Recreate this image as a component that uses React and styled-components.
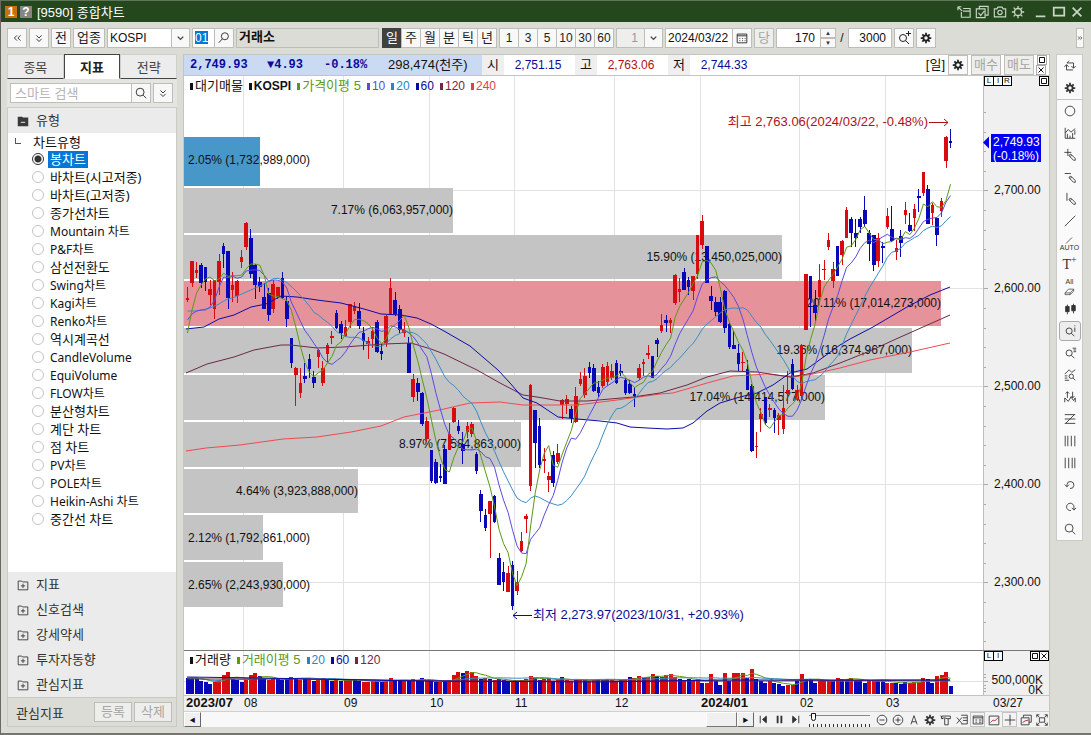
import React from "react";
import styled, { createGlobalStyle, css } from "styled-components";

const GlobalStyle = createGlobalStyle`
  * {
    box-sizing: border-box;
  }

  body {
    margin: 0;
    background: #dcdcd6;
  }

  body, button, input, select {
    font-family: "Liberation Sans", "Noto Sans CJK KR", sans-serif;
    font-size: 12px;
    color: #111;
  }

  button, input, select {
    margin: 0;
    padding: 0;
    border-radius: 0;
    outline: none;
  }
`;

/* ---------- data ---------- */

// one row per day: up (1) or down (0), body top, body bottom, wick top, wick bottom
const CANDLES = [
  [1, 298, 300, 287, 302], [1, 261, 283, 261, 287], [1, 270, 273, 262, 278], [0, 265, 283, 263, 288],
  [0, 267, 282, 267, 291], [1, 289, 295, 280, 305], [1, 280, 309, 280, 319], [1, 261, 282, 254, 295],
  [0, 246, 254, 243, 268], [0, 251, 298, 251, 309], [1, 285, 290, 272, 302], [1, 281, 296, 280, 303],
  [1, 257, 262, 250, 268], [1, 223, 247, 222, 250], [0, 238, 274, 229, 278], [0, 265, 285, 264, 299],
  [0, 282, 287, 277, 292], [0, 297, 309, 283, 309], [0, 293, 315, 288, 321], [1, 284, 309, 280, 313],
  [1, 287, 297, 287, 299], [0, 278, 298, 272, 299], [0, 301, 319, 297, 327], [0, 338, 363, 338, 368],
  [1, 368, 375, 367, 406], [1, 383, 393, 368, 398], [0, 376, 379, 363, 383], [0, 359, 369, 354, 378],
  [0, 377, 383, 371, 388], [1, 350, 357, 349, 368], [1, 368, 383, 361, 386], [1, 345, 354, 343, 362],
  [1, 336, 338, 331, 344], [0, 313, 328, 310, 329], [0, 324, 333, 321, 339], [1, 327, 336, 320, 337],
  [1, 304, 322, 304, 328], [1, 306, 311, 302, 314], [0, 311, 326, 303, 329], [0, 333, 341, 327, 350],
  [1, 341, 344, 337, 359], [1, 331, 339, 327, 348], [0, 322, 352, 320, 353], [0, 351, 354, 344, 360],
  [1, 316, 343, 315, 347], [1, 288, 314, 278, 315], [0, 300, 314, 292, 316], [0, 309, 330, 305, 333],
  [1, 330, 333, 322, 337], [0, 343, 373, 337, 373], [1, 379, 397, 374, 402], [0, 383, 392, 378, 401],
  [0, 393, 424, 392, 426], [1, 421, 439, 417, 442], [0, 450, 481, 450, 483], [0, 462, 483, 459, 484],
  [0, 476, 478, 464, 482], [0, 449, 484, 445, 484], [1, 434, 450, 423, 450], [1, 408, 422, 407, 423],
  [0, 426, 431, 420, 434], [0, 444, 451, 432, 464], [1, 426, 432, 422, 438], [1, 424, 434, 422, 437],
  [0, 454, 471, 452, 474], [0, 494, 511, 490, 522], [0, 515, 528, 509, 531], [1, 501, 514, 501, 558],
  [0, 496, 522, 495, 523], [0, 558, 585, 553, 585], [0, 572, 582, 562, 591], [1, 573, 592, 566, 592],
  [0, 565, 606, 561, 610], [1, 582, 591, 571, 595], [1, 541, 551, 532, 552], [1, 516, 519, 514, 533],
  [1, 385, 486, 384, 491], [0, 410, 443, 410, 468], [0, 426, 465, 418, 468], [1, 459, 461, 448, 473],
  [1, 476, 480, 472, 492], [0, 455, 483, 451, 487], [1, 453, 462, 444, 464], [1, 400, 405, 399, 419],
  [1, 399, 404, 395, 414], [0, 409, 418, 406, 423], [1, 396, 422, 387, 423], [1, 379, 384, 372, 386],
  [1, 376, 395, 368, 398], [0, 367, 373, 362, 378], [0, 368, 391, 364, 392], [0, 387, 393, 381, 397],
  [1, 367, 386, 364, 388], [1, 366, 382, 362, 386], [1, 371, 378, 364, 380], [0, 363, 383, 360, 384],
  [0, 371, 373, 364, 376], [0, 380, 393, 378, 395], [0, 384, 393, 380, 394], [0, 394, 396, 387, 407],
  [1, 368, 378, 364, 380], [1, 362, 364, 359, 376], [1, 353, 355, 345, 359], [0, 356, 378, 356, 378],
  [0, 340, 344, 338, 357], [1, 325, 331, 314, 333], [0, 320, 323, 315, 332], [1, 320, 323, 318, 333],
  [1, 275, 303, 274, 305], [1, 289, 292, 278, 302], [0, 272, 290, 268, 290], [0, 280, 287, 277, 295],
  [1, 276, 291, 276, 300], [1, 235, 274, 235, 279], [1, 221, 245, 215, 249], [0, 246, 283, 246, 283],
  [0, 296, 301, 286, 310], [0, 302, 312, 297, 316], [0, 302, 322, 297, 323], [0, 291, 328, 290, 333],
  [0, 324, 347, 322, 349], [0, 345, 349, 331, 349], [0, 353, 364, 344, 371], [1, 362, 363, 352, 372],
  [0, 369, 390, 360, 390], [0, 386, 451, 384, 452], [1, 446, 447, 432, 458], [1, 414, 419, 408, 432],
  [0, 397, 423, 397, 425], [1, 408, 410, 404, 417], [0, 410, 418, 408, 433], [1, 415, 420, 413, 435],
  [1, 408, 429, 385, 434], [1, 390, 394, 371, 404], [0, 364, 389, 359, 390], [1, 390, 400, 385, 401],
  [1, 345, 396, 344, 400], [1, 274, 330, 274, 330], [0, 276, 299, 276, 327], [0, 305, 313, 290, 321],
  [1, 280, 297, 264, 300], [1, 269, 270, 260, 280], [1, 240, 247, 233, 250], [1, 269, 281, 262, 288],
  [0, 246, 276, 246, 276], [1, 241, 255, 240, 265], [1, 210, 238, 207, 238], [0, 219, 233, 217, 247],
  [0, 233, 238, 219, 247], [0, 219, 227, 217, 233], [0, 210, 224, 196, 227], [0, 233, 244, 230, 261],
  [0, 235, 265, 235, 271], [1, 238, 261, 233, 267], [0, 246, 248, 242, 263], [1, 216, 227, 208, 229],
  [0, 229, 241, 206, 242], [1, 248, 252, 240, 260], [0, 236, 243, 230, 257], [1, 210, 215, 202, 224],
  [0, 225, 231, 213, 232], [1, 209, 218, 204, 231], [0, 196, 198, 189, 212], [1, 172, 193, 172, 196],
  [0, 189, 224, 185, 224], [1, 205, 213, 203, 225], [0, 218, 235, 217, 246], [1, 201, 211, 198, 217],
  [1, 137, 161, 136, 168], [0, 141, 143, 129, 148],
];

// bar heights, negative for a down day
const VOLUMES = [
  -16, -16, -16, -13, -12, -10, 12, 14, 19, 22, -15, -14, -12, 14, 19, 21, -18, -15, 14, 16,
  -15, -14, -16, 17, -15, 14, -15, 15, -13, 14, 16, -14, -13, 14, -13, 14, 15, -14, -13, 12,
  12, 13, -13, -12, 14, 16, -13, -14, 13, -14, 15, -14, -16, 14, -13, -12, 12, -13, 14, 19,
  22, -21, 23, 22, 18, -15, 16, -15, 14, -15, -14, -13, 12, -13, 14, 15, 18, -16, -14, 15,
  16, -13, 15, -17, 14, 13, -14, 15, -14, 13, 14, -15, -14, -15, 14, 13, -14, 15, -17, 16,
  18, -16, 17, 20, -18, 17, 19, 20, 17, -15, 14, -15, 14, 15, -11, 11, 20, -13, -9, 21,
  -13, 21, 21, 21, -16, 25, -15, -13, -11, 13, -11, -10, -8, 9, 9, -13, 20, -15, -15, -11,
  13, 13, 13, -14, 16, -15, -15, 16, -14, -14, -11, 13, 13, -13, -13, 11, 11, -11, -10, -12,
  11, 12, 12, 16, -15, -11, 18, 19, 22, -8,
];

const PROFILE = [
  { y: 137, h: 49, end: 260, label: "2.05% (1,732,989,000)", fill: "#4798c9" },
  { y: 188, h: 45, end: 453, label: "7.17% (6,063,957,000)" },
  { y: 235, h: 44, end: 782, label: "15.90% (13,450,025,000)" },
  { y: 281, h: 45, end: 941, label: "20.11% (17,014,273,000)", fill: "#e6929b" },
  { y: 328, h: 45, end: 912, label: "19.36% (16,374,967,000)" },
  { y: 375, h: 45, end: 825, label: "17.04% (14,414,577,000)" },
  { y: 422, h: 45, end: 521, label: "8.97% (7,584,863,000)" },
  { y: 469, h: 44, end: 358, label: "4.64% (3,923,888,000)" },
  { y: 515, h: 45, end: 263, label: "2.12% (1,792,861,000)" },
  { y: 562, h: 45, end: 283, label: "2.65% (2,243,930,000)" },
];

const MA60 =
  "186,329 204,327 219,319 234,315 251,307 266,304 281,296 297,297 317,300 341,303 364,309 381,314 401,315 417,318 431,324 444,331 470,346 484,358 498,370 510,383 523,398 537,403 558,417 577,419 600,421 617,423 630,427 647,428 667,429 683,428 693,423 707,411 720,403 740,397 757,393 773,385 790,373 807,369 840,345 850,339 873,327 907,307 930,295 950,287";
const MA120 =
  "186,373 207,364 234,357 254,350 281,345 291,345 317,348 344,347 384,344 411,343 431,349 444,354 477,370 500,383 523,395 537,397 560,401 587,401 633,397 660,393 687,385 707,377 730,371 757,372 790,377 813,373 840,363 870,351 896,339 923,327 950,315";
const MA240 =
  "186,451 206,448 240,445 283,439 317,437 351,432 381,426 404,417 424,413 444,409 470,403 500,402 523,405 577,405 617,400 660,394 673,393 707,383 733,376 767,374 793,377 813,374 840,368 870,360 910,352 950,343";

const MONTH_LINES = [243, 343, 429, 514, 614, 700, 799, 885];
const PRICE_LINES = [
  { y: 190, label: "2,700.00" },
  { y: 288, label: "2,600.00" },
  { y: 386, label: "2,500.00" },
  { y: 484, label: "2,400.00" },
  { y: 582, label: "2,300.00" },
];

const CHART_TYPES = [
  "봉차트", "바차트(시고저종)", "바차트(고저종)", "종가선차트", "Mountain 차트", "P&F차트", "삼선전환도",
  "Swing차트", "Kagi차트", "Renko차트", "역시계곡선", "CandleVolume", "EquiVolume", "FLOW차트",
  "분산형차트", "계단 차트", "점 차트", "PV차트", "POLE차트", "Heikin-Ashi 차트", "중간선 차트",
];
const FOLDERS = ["지표", "신호검색", "강세약세", "투자자동향", "관심지표"];

const barX = (i) => 187.5 + i * 4.515;

const movingAverage = (values, span, seed) =>
  values
    .map((_, i) => {
      if (i < seed.length) return `${barX(i)},${seed[i]}`;
      const part = values.slice(Math.max(0, i - span + 1), i + 1);
      return `${barX(i)},${part.reduce((a, b) => a + b, 0) / part.length}`;
    })
    .join(" ");

const CLOSES = CANDLES.map(([up, top, bottom]) => (up ? top : bottom));
const VOLUME_TOPS = VOLUMES.map((v) => 694 - Math.abs(v));

const MA5 = movingAverage(CLOSES, 5, [333, 310, 293, 285]);
const MA10 = movingAverage(CLOSES, 10, [320, 314, 311, 310, 310, 307, 300, 287, 277]);
const MA20 = movingAverage(CLOSES, 20, [
  311, 311, 311, 310, 309, 308, 306, 304, 301, 299, 298, 296, 294, 292, 290, 288, 286, 284, 281,
]);

/* ---------- icons ---------- */

const GEAR = (
  <>
    <circle cx="8" cy="8" r="3" strokeWidth="2" />
    <path strokeWidth="2" d="M8 2v3M8 11v3M2 8h3M11 8h3M3.8 3.8l2 2M10.2 10.2l2 2M12.2 3.8l-2 2M5.8 10.2l-2 2" />
  </>
);
const LENS = <path d="M10.5 8a3.5 3.5 0 1 1-7 0a3.5 3.5 0 0 1 7 0M9.5 10.5L13 14" />;
const PENCIL = <path d="M7 8l2-1 5 5v2h-2l-5-5zM8 10l2-2" />;

const SHAPES = {
  gear: GEAR,
  search: <path d="M11.5 7a4.5 4.5 0 1 1-9 0a4.5 4.5 0 0 1 9 0M10.5 10.5L14 14" />,
  searchLeft: <path d="M13 6a4 4 0 1 1-8 0a4 4 0 0 1 8 0M6 9L2 13.5" />,
  searchPlus: <>{LENS}<path d="M12.5 1v5M10 3.5h5" /></>,
  left: <path d="M8 5L5 8l3 3M12 5L9 8l3 3" />,
  right: <path strokeWidth="2" d="M3 4l4 4-4 4M9 4l4 4-4 4" />,
  down: <path d="M5 5l3 3 3-3M5 9l3 3 3-3" />,
  chevron: <path strokeWidth="2" d="M4 6l4 4 4-4" />,
  calendar: <path d="M2.5 3.5h11v10h-11zM2.5 5.5h11M5 8.5h1M8 8.5h1M11 8.5h1M5 11h1M8 11h1M11 11h1" />,
  sync: <path d="M4.5 4.5H12v6M9.5 8l2.5 2.5L14.5 8M11.5 12.5H4v-6M1.5 9L4 6.5 6.5 9M7 2L4.5 4.5" />,
  circle: <circle cx="8" cy="8" r="5.5" />,
  chart: <path d="M2.5 2v12H14M5 14V9M8 14v-3M11 14V8M2.5 8L6 4l3 3 5-4M13.5 5v5" />,
  plusPen: <><path d="M5.5 1v8M1.5 5h8" />{PENCIL}</>,
  linePen: <><path d="M2 4h7" />{PENCIL}</>,
  vertPen: <><path d="M4.5 1v9" />{PENCIL}</>,
  slash: <path d="M2 14L14 2" />,
  shortSlash: <path strokeWidth="1.5" d="M2 15L14 3" />,
  candles: <path fill="currentColor" d="M3 5h4v6H3zM10 4h4v6h-4zM5 3v11M12 2v11" />,
  lensInfo: <>{LENS}<path d="M13.5 4v5M13.5 1.5v1" /></>,
  lensList: <>{LENS}<path d="M11 2.5h4M12 4.5h3M12 6.5h3" /></>,
  lensChart: <path d="M2 7l5-5 3 3 4-3M2 9h3M2 11.5h3M2 14h5M12 9.5a2.5 2.5 0 1 1-5 0a2.5 2.5 0 0 1 5 0M11.5 11.5L14 14" />,
  arrowsChart: <path d="M5 9V2M3 4l2-2 2 2M11 2v7M9 7l2 2 2-2M2 14V9l4 4 3-5 3 4 2-3v5" />,
  zigzag: <path d="M2 3h12M2 13h12M2 8h12M13 3L3 13" />,
  bars: <path d="M2.5 2v12M5.5 2v12M9.5 2v12M13.5 2v12" />,
  barsEven: <path d="M2.5 2v12M6.5 2v12M10.5 2v12M13.5 2v12" />,
  undo: <path d="M4.5 10V7.5a4 4 0 1 1 3.5 4.5M2 7.5L4.5 10 7 7.5" />,
  redo: <path d="M9 12a4.2 4.2 0 1 1 3.5-4v3M10 9l2.5 2.5L15 9" />,
  swap: <path strokeWidth="1.3" d="M7 4h8v10H5V8M7 7h8M1 2h4M1 2v4M1 2l5 5" />,
  copyCheck: <path strokeWidth="1.3" d="M5 4V1.5h10v10h-3M1.5 4.5h10v10h-10zM4 9l2.5 3 4-5" />,
  camera: <path strokeWidth="1.3" d="M1.5 4.5h3l1-2h5l1 2h3v9h-13zM10.5 8.5a2.5 2.5 0 1 1-5 0a2.5 2.5 0 0 1 5 0" />,
  gearThin: (
    <>
      <circle cx="8" cy="8" r="4" strokeWidth="1.5" />
      <path strokeWidth="1.5" d="M8 1v3M8 12v3M1 8h3M12 8h3M3 3l2 2M11 11l2 2M13 3l-2 2M5 11l-2 2" />
    </>
  ),
  minimize: <path strokeWidth="2" d="M2 13h11" />,
  maximize: <path strokeWidth="2" d="M2 3h12v9H2z" />,
  close: <path strokeWidth="2" d="M3 3l10 10M13 3L3 13" />,
  box: <path strokeWidth="2" d="M3 3h10v10H3z" />,
  cut: <path strokeWidth="2" d="M3 3l10 10M13 3L3 13" />,
  prev: <path fill="currentColor" d="M4.5 4v8M11 4.5v7L7 8z" />,
  pause: <path strokeWidth="2" d="M6 4v8M10 4v8" />,
  next: <path fill="currentColor" d="M11.5 4v8M5 4.5v7L9 8z" />,
  minus: <path d="M13.5 8a5.5 5.5 0 1 1-11 0a5.5 5.5 0 0 1 11 0M5 8h6" />,
  plus: <path d="M13.5 8a5.5 5.5 0 1 1-11 0a5.5 5.5 0 0 1 11 0M5 8h6M8 5v6" />,
  letterA: <path d="M4.5 13L8 3l3.5 10M5.5 10h5" />,
  hammer: <path d="M3 3.5h10v3h-3l-4-1-3 1zM6.5 6v7.5h4V6M2 3l2 4" />,
  sheet: <path d="M7 2.5h7v10H7M9 5.5h5M9 8.5h5M2 5l6 7M8 5l-6 7" />,
  table: <path d="M2.5 3.5h11v9h-11zM2.5 5.5h11M5 8h2M9 8h3M5 10.5h2M9 10.5h3" />,
  trend: <><path d="M2.5 3.5h11v10h-11z" /><path stroke="#a02030" d="M4 11l3-3 2 1 4-4" /></>,
  cross: <path d="M8 2v12M2 8h12" />,
  windows: <><path d="M5 5V2.5h9v8h-3M2.5 5.5h9v8h-9z" /><path stroke="#a02030" d="M4 11l3-2 4-1" /></>,
  expand: <path d="M2 5V2h3M11 2h3v3M14 11v3h-3M5 14H2v-3M5 5.5h6v5H5zM2 2l3 3M14 2l-3 3M14 14l-3-3M2 14l3-3" />,
  folder: <path d="M2.5 3.5h4l1 1h6v9h-11zM8 6.5v5M5.5 9h5" />,
  folderOpen: <><path fill="#3a3a3a" stroke="none" d="M2 3h5l1 1h6v10H2z" /><path stroke="#fff" d="M5.5 9.5h5" /></>,
  eraser: <path d="M1.5 11.5L6.5 6H14v3l-5 5H1.5zM1.5 11.5H9L14 6.5M9 11.5V14" />,
};

const Svg = styled.svg`
  display: block;
  flex: none;
  fill: none;
  stroke: currentColor;
  stroke-width: 1;
`;

const Icon = ({ name, size = 14 }) => (
  <Svg width={size} height={size} viewBox="0 0 16 16" aria-hidden="true">
    {SHAPES[name]}
  </Svg>
);

/* ---------- window ---------- */

const Window = styled.div`
  display: flex;
  flex-direction: column;
  min-height: 100vh;
  padding-bottom: 8px;
  background: #dcdcd6;
  border-left: 1px solid #6a6964;
  box-shadow: inset 0 -2px 0 #77756f;
`;

const TitleBar = styled.header`
  display: flex;
  align-items: center;
  height: 22px;
  padding: 0 7px 0 4px;
  gap: 3px;
  background: #24471d;
  border-top: 1px solid #5f7759;
  color: #fff;
`;

const Badge = styled.span`
  width: 12px;
  height: 12px;
  line-height: 12px;
  text-align: center;
  font-weight: bold;
  background: ${(p) => p.$color};
`;

const Title = styled.h1`
  flex: 1;
  margin: 0 0 0 2px;
  font-size: 13px;
  font-weight: normal;
`;

const TitleButton = styled.button`
  display: grid;
  place-items: center;
  width: 15px;
  height: 18px;
  margin-left: ${(p) => (p.$apart ? "5px" : "0")};
  border: 0;
  background: none;
  color: #c9d6c5;
`;

const Toolbar = styled.div`
  display: flex;
  align-items: center;
  height: 32px;
  padding: 0 7px 0 6px;
  gap: 2px;
`;

const Button = styled.button`
  display: flex;
  align-items: center;
  justify-content: center;
  flex: none;
  width: ${(p) => p.$width || 20}px;
  height: 20px;
  border: 1px solid #bdbdba;
  background: #f8f8f8;
  font-size: ${(p) => (p.$latin ? 12 : 13)}px;
  line-height: 18px;
  white-space: nowrap;
  color: #222;

  &:disabled {
    color: #a5a5a2;
    background: #eeeeec;
  }

  ${(p) =>
    p.$active &&
    css`
      background: #404040;
      border-color: #404040;
      color: #fff;
    `}
`;

const Joined = styled.div`
  display: flex;
  flex: none;
  margin-left: ${(p) => p.$gap || 0}px;

  & > * + * {
    margin-left: -1px;
  }
`;

const Field = styled.input`
  width: ${(p) => p.$width}px;
  height: 20px;
  padding: 0 5px 0 2px;
  border: 1px solid #bdbdba;
  background: #fff;
  text-align: ${(p) => p.$align || "left"};
`;

const DateField = styled(Field)`
  padding: 0 0 0 2px;
`;

const CodeField = styled(Field)`
  padding-right: 0;
  color: #fff;
  background: linear-gradient(#0078d7, #0078d7) 2px 2px / 13px 13px no-repeat #fff;
`;

const NameField = styled.output`
  flex: none;
  width: 143px;
  height: 20px;
  padding-left: 2px;
  border: 1px solid #bdbdba;
  font-size: 13px;
  font-weight: bold;
  line-height: 16px;
`;

const SelectBox = styled.div`
  position: relative;
  flex: none;
  width: ${(p) => p.$width}px;
  height: 20px;

  select {
    width: 100%;
    height: 100%;
    padding: 0 24px 0 2px;
    appearance: none;
    border: 1px solid #bdbdba;
    background: ${(p) => (p.$muted ? "#eeeeec" : "#fff")};
    color: ${(p) => (p.$muted ? "#999" : "#111")};
    text-align: ${(p) => (p.$muted ? "right" : "left")};
  }

  svg {
    position: absolute;
    right: 0;
    top: 0;
    width: 19px;
    height: 20px;
    padding: 3px;
    border: 1px solid #bdbdba;
    background: #f8f8f8;
    color: #444;
    pointer-events: none;
  }
`;

const Spinner = styled.div`
  display: flex;
  flex-direction: column;

  button {
    width: 16px;
    height: 10px;
    border: 1px solid #bdbdba;
    background: #f8f8f8;
    font-size: 6px;
    line-height: 6px;
    color: #333;
  }
`;

const Slash = styled.span`
  width: 8px;
  text-align: center;
`;

const Spacer = styled.span`
  flex: 1;
`;

const Main = styled.main`
  display: flex;
  flex: 1;
  gap: 6px;
  padding: 0 8px 0 6px;
`;

/* ---------- sidebar ---------- */

const Sidebar = styled.aside`
  display: flex;
  flex-direction: column;
  flex: none;
  width: 170px;
`;

const Tabs = styled.div`
  display: flex;
  height: 25px;
`;

const Tab = styled.button`
  flex: 1;
  border: 1px solid #cfcfcb;
  border-bottom-color: #444;
  background: #ececec;
  font-size: 13px;
  color: #444;

  ${(p) =>
    p.$active &&
    css`
      border-color: #444;
      border-bottom-color: #fff;
      background: #fff;
      font-weight: bold;
      color: #222;
    `}
`;

const SearchRow = styled.div`
  display: flex;
  gap: 2px;
  padding: 4px 3px;
  background: #e4e4e0;

  input {
    padding-left: 4px;
    font-size: 13px;
  }

  input::placeholder {
    color: #b5b5b5;
  }
`;

const TreeHeader = styled.button`
  display: flex;
  align-items: center;
  gap: 6px;
  width: 100%;
  height: 25px;
  padding: 0 8px;
  border: 0;
  background: #ebebeb;
  font-size: 13px;
  line-height: 18px;
  color: #333;
`;

const Tree = styled.div`
  display: flex;
  flex-direction: column;
  flex: 1;
  border: 1px solid #cbcbc7;
  border-bottom: 0;
  background: #fff;
`;

const TypeList = styled.fieldset`
  flex: 1;
  min-width: 0;
  margin: 0;
  padding: 0 0 0 24px;
  border: 0;
  font-family: "Noto Sans", "Noto Sans CJK KR", sans-serif;
`;

const TypeGroup = styled.legend`
  height: 17px;
  padding: 0;
  font-family: "Noto Sans CJK KR", sans-serif;
  font-size: 13px;
  line-height: 17px;

  &::before {
    content: "";
    float: left;
    width: 5px;
    height: 5px;
    margin: 5px 12px 0 -17px;
    border-left: 1px solid #555;
    border-bottom: 1px solid #555;
  }
`;

const TypeItem = styled.label`
  display: flex;
  align-items: center;
  height: 18px;
  gap: 4px;

  input {
    appearance: none;
    width: 12px;
    height: 12px;
    border: 1px solid #c4c4c4;
    border-radius: 50%;
    background: #fff;
  }

  input:checked {
    border-color: #333;
    background: radial-gradient(circle, #333 3px, #fff 4px);
  }

  span {
    padding: 0 2px;
    font-size: ${(p) => (p.$latin ? 12 : 13)}px;
    line-height: 17px;
    white-space: nowrap;
  }

  input:checked + span {
    background: #0078d7;
    color: #fff;
  }
`;

const SidebarFooter = styled.div`
  display: flex;
  align-items: center;
  height: 30px;
  gap: 2px;
  padding: 0 4px 0 8px;
  border: 1px solid #c8c8c4;
  font-size: 13px;
  color: #333;

  span {
    flex: 1;
  }
`;

/* ---------- chart panel ---------- */

const Panel = styled.section`
  display: flex;
  flex-direction: column;
  flex: 1;
  min-width: 0;
  border: solid #c4c4c0;
  border-width: 1px 1px 0;
  background: #fff;
`;

const QuoteBar = styled.div`
  display: flex;
  align-items: center;
  flex: none;
  height: 21px;
  padding-right: 2px;
  gap: 3px;
  border-bottom: 1px solid #c4c4c0;
`;

const Last = styled.div`
  display: flex;
  align-items: center;
  flex: none;
  height: 20px;
  width: 298px;
  margin-right: -3px;
  padding-left: 6px;
  background: #cbdaf3;
  font-family: "Liberation Mono", "Noto Sans CJK KR", monospace;
  font-weight: bold;
  line-height: 18px;
  color: #0a0aa0;
`;

const LastItem = styled.span`
  flex: none;
  width: ${(p) => p.$width}px;
`;

const Amount = styled.span`
  font-family: "Liberation Sans", "Noto Sans CJK KR", sans-serif;
  font-size: 13px;
  font-weight: normal;
  color: #111;
`;

const Period = styled.span`
  font-size: 13px;
  line-height: 18px;
`;

const Quote = styled.dl`
  display: flex;
  align-items: center;
  margin: 0;
  width: 90px;
  height: 20px;

  dt {
    width: 22px;
    line-height: 20px;
    text-align: center;
    background: #efefef;
    font-size: 13px;
  }

  dd {
    flex: 1;
    margin: 0;
    text-align: center;
    color: ${(p) => p.$color};
  }
`;

const TinyStack = styled.div`
  display: flex;
  flex-direction: column;
`;

const Tiny = styled.button`
  display: grid;
  place-items: center;
  width: 10px;
  height: 10px;
  border: 1px solid ${(p) => (p.$soft ? "#aaa" : "#000")};
  background: #fff;
  font-size: 8px;
  line-height: 8px;

  & + & {
    margin-left: ${(p) => (p.$soft ? "0" : "-1px")};
  }
`;

const Pane = styled.div`
  position: relative;
  flex: ${(p) => (p.$grow ? "1" : "none")};
  border-top: ${(p) => (p.$grow ? "0" : "1px solid #777")};

  & > svg {
    display: block;
    width: 100%;
    height: 100%;
  }
`;

const Legend = styled.div`
  position: absolute;
  top: ${(p) => p.$top}px;
  left: 6px;
  display: flex;
  align-items: center;
  gap: 6px;
  line-height: 14px;
`;

const LegendItem = styled.span`
  display: flex;
  align-items: center;
  gap: 2px;
  font-size: ${(p) => (p.$named ? 13 : 12)}px;
  color: ${(p) => p.$color};

  &::before {
    content: "";
    width: 3px;
    height: 7px;
    background: currentColor;
  }
`;

const SymbolItem = styled(LegendItem)`
  font-weight: bold;
`;

const PaneTools = styled.div`
  position: absolute;
  top: 0;
  right: 0;
  display: flex;
  width: 65px;

  & > :last-child {
    margin-left: auto;
  }
`;

const TimeAxis = styled.div`
  flex: none;
  height: 16px;
  border-top: 1px solid #c4c4c4;
  background: #f0f0f0;

  svg {
    display: block;
    width: 100%;
    height: 15px;
  }
`;

const ScrollRow = styled.div`
  display: flex;
  align-items: center;
  flex: none;
  height: 16px;
  border-top: 1px solid #d0d0d0;
  background: #f3f3f3;
`;

const Track = styled.div`
  display: flex;
  justify-content: flex-end;
  flex: 1;
  height: 15px;
  background: #f8f8f8;
`;

const Thumb = styled.div`
  width: 31px;
  border: 1px solid #fff;
  border-right-color: #777;
  border-bottom-color: #777;
  background: #f0f0f0;
`;

const ScrollButton = styled.button`
  width: 17px;
  height: 15px;
  border: 1px solid #fff;
  border-right-color: #666;
  border-bottom-color: #666;
  background: #f0f0f0;
  font-size: 6px;
  line-height: 12px;
`;

const ScrollTools = styled.div`
  display: flex;
  justify-content: space-between;
  width: ${(p) => p.$width}px;
  margin-left: ${(p) => p.$gap}px;
`;

const FlatButton = styled.button`
  display: grid;
  place-items: center;
  width: 15px;
  height: 15px;
  border: ${(p) => (p.$boxed ? "1px solid #c4c4c4" : "0")};
  background: none;
  color: #333;
`;

const Zoom = styled.input`
  appearance: none;
  width: 61px;
  height: 14px;
  margin: 0 0 0 6px;
  background:
    linear-gradient(#888, #888) 0 2px / 100% 1px no-repeat,
    repeating-linear-gradient(90deg, #333 0 1px, transparent 1px 4px) 0 100% / 100% 3px no-repeat;

  &::-webkit-slider-thumb {
    appearance: none;
    width: 5px;
    height: 8px;
    margin-bottom: 5px;
    border: 1px solid #111;
    border-radius: 0 0 3px 3px;
    background: #fff;
  }
`;

/* ---------- drawing tools ---------- */

const ToolStrip = styled.nav`
  display: flex;
  flex-direction: column;
  align-items: center;
  align-self: flex-start;
  flex: none;
  width: 27px;
  border: 1px solid #cacac6;
  background: #fafafa;
`;

const Tool = styled.button`
  display: grid;
  place-items: center;
  place-content: center;
  width: 22px;
  height: 20px;
  margin: 1px 0;
  border: 1px solid ${(p) => (p.$active ? "#aaa" : "transparent")};
  border-radius: 3px;
  background: ${(p) => (p.$active ? "#ededed" : "none")};
  color: #333;
`;

const ToolLine = styled.hr`
  width: 100%;
  height: 1px;
  margin: 0;
  border: 0;
  background: #c4c4c4;
`;

const ToolText = styled.span`
  font-size: 7px;
  line-height: 7px;
`;

const ToolLetter = styled.span`
  font-family: "Liberation Serif", serif;
  font-size: 14px;
  line-height: 14px;

  sup {
    font-size: 10px;
    line-height: 1px;
  }
`;

/* ---------- parts ---------- */

const Bar = ({ index, top, bottom, color, half = 1.8 }) => {
  const left = Math.round(barX(index) - half);
  const right = Math.round(barX(index) + half);
  return <rect x={left} y={top} width={right - left} height={Math.max(1, bottom - top)} fill={color} />;
};

const colorOf = (up) => (up ? "#d80c10" : "#0808b8");

const AxisText = styled.text`
  font-family: "Liberation Sans", "Noto Sans CJK KR", sans-serif;
  font-size: ${(p) => (p.$large ? 13 : 12)}px;
  font-weight: ${(p) => (p.$bold ? "bold" : "normal")};
  fill: ${(p) => p.$color || "#111"};
`;

const Line = styled.polyline`
  fill: none;
  stroke: ${(p) => p.$color};
  stroke-width: 1;
`;

const PriceChart = () => (
  <svg viewBox="184 76 865 574" preserveAspectRatio="xMinYMin meet" role="img" aria-label="KOSPI">
    <g shapeRendering="crispEdges">
      {MONTH_LINES.map((x) => <rect key={x} x={x} y="76" width="1" height="574" fill="#e2e2e2" />)}
      {PRICE_LINES.map(({ y }) => <rect key={y} x="184" y={y} width="800" height="1" fill="#e2e2e2" />)}
      {PROFILE.map((p) => (
        <rect key={p.y} x="184" y={p.y} width={p.end - 184} height={p.h} fill={p.fill || "#c4c4c4"} />
      ))}
      <rect x="983" y="76" width="66" height="574" fill="#f0f0f0" />
      <rect x="983" y="76" width="1" height="574" fill="#bdbdbd" />
      {Array.from({ length: 28 }, (_, i) => (
        <rect key={i} x="984" y={Math.round(112 + i * 19.6)} width={i % 5 === 4 ? 4 : 2} height="1" fill="#aaa" />
      ))}
    </g>
    {PROFILE.map((p) =>
      p.end > 320 ? (
        <AxisText key={p.y} x={p.end} y={p.y + 26} textAnchor="end">{p.label}</AxisText>
      ) : (
        <AxisText key={p.y} x="188" y={p.y + 27}>{p.label}</AxisText>
      )
    )}
    <g shapeRendering="crispEdges">
      {CANDLES.map(([up, top, bottom, high, low], i) => (
        <g key={i}>
          <rect x={Math.floor(barX(i))} y={high} width="1" height={low - high} fill={colorOf(up)} />
          <Bar index={i} top={top} bottom={bottom} color={colorOf(up)} />
        </g>
      ))}
    </g>
    <Line $color="#f04a50" points={MA240} />
    <Line $color="#702846" points={MA120} />
    <Line $color="#0c0ca8" points={MA60} />
    <Line $color="#3a8cc4" points={MA20} />
    <Line $color="#5a4ae0" points={MA10} />
    <Line $color="#5a9a14" points={MA5} />
    <AxisText x="928" y="126" textAnchor="end" $large $color="#b01018">최고 2,763.06(2024/03/22, -0.48%)</AxisText>
    <Line $color="#b01018" points="929,122.5 948,122.5" />
    <Line $color="#b01018" points="944,119 948,122.5 944,126" />
    <AxisText x="533" y="619" $large $color="#0a0a98">최저 2,273.97(2023/10/31, +20.93%)</AxisText>
    <Line $color="#0a0a98" points="513,615.5 532,615.5" />
    <Line $color="#0a0a98" points="517,612 513,615.5 517,619" />
    {PRICE_LINES.map(({ y, label }) => <AxisText key={y} x="994" y={y + 4}>{label}</AxisText>)}
    <path d="M983 142.5l6-6v12z" fill="#0000f0" />
    <rect x="991" y="134" width="50" height="28" fill="#0000f0" />
    <AxisText x="993" y="146" $color="#fff">2,749.93</AxisText>
    <AxisText x="993" y="160" $color="#fff">(-0.18%)</AxisText>
  </svg>
);

const VolumeChart = () => (
  <svg viewBox="184 651 865 44" preserveAspectRatio="xMinYMin meet" role="img" aria-label="거래량">
    <g shapeRendering="crispEdges">
      {MONTH_LINES.map((x) => <rect key={x} x={x} y="651" width="1" height="44" fill="#e2e2e2" />)}
      <rect x="184" y="681" width="799" height="1" fill="#e2e2e2" />
      {VOLUMES.map((v, i) => (
        <Bar key={i} index={i} top={694 - Math.abs(v)} bottom={694} color={colorOf(v > 0)} half={2} />
      ))}
      <rect x="983" y="651" width="66" height="44" fill="#f0f0f0" />
      <rect x="983" y="651" width="1" height="44" fill="#bdbdbd" />
      {[674, 677, 681, 685, 688, 691].map((y) => (
        <rect key={y} x="984" y={y} width={y === 681 ? 4 : 2} height="1" fill="#aaa" />
      ))}
    </g>
    <Line $color="#5a9a14" points={movingAverage(VOLUME_TOPS, 5, [])} />
    <Line $color="#3a8cc4" points={movingAverage(VOLUME_TOPS, 20, [])} />
    <Line $color="#702846" points="187,679 300,679 450,681 600,681 760,681 950,680" />
    <Line $color="#0c0ca8" points="187,677 260,678 420,681 600,682 720,680 950,680" />
    <AxisText x="1043" y="684" textAnchor="end">500,000K</AxisText>
    <AxisText x="1043" y="694" textAnchor="end">0K</AxisText>
  </svg>
);

const MONTHS = [
  [186, "2023/07"], [244, "08"], [344, "09"], [430, "10"], [515, "11"],
  [615, "12"], [701, "2024/01"], [800, "02"], [886, "03"], [993, "03/27"],
];

const TITLE_ICONS = ["swap", "copyCheck", "camera", "gearThin", "minimize", "maximize", "close"];
const TOOLS = [
  "circle", "chart", "plusPen", "linePen", "vertPen", "slash", "auto", "text", "all", "candles", "lensInfo",
  "lensList", "lensChart", "arrowsChart", "zigzag", "bars", "barsEven", "undo", "redo", "search",
];
const BOTTOM_TOOLS = [
  "minus", "plus", "letterA", "gear", "hammer", "sheet", "table", "trend", "cross", "windows", "expand",
];

const TopTools = () => (
  <Toolbar>
    <Button aria-label="이전"><Icon name="left" /></Button>
    <Button aria-label="펼치기"><Icon name="down" /></Button>
    <Button>전</Button>
    <Button $width={32}>업종</Button>
    <SelectBox $width={83}>
      <select aria-label="지수"><option>KOSPI</option></select>
      <Icon name="chevron" />
    </SelectBox>
    <Joined>
      <CodeField $width={23} aria-label="코드" defaultValue="01" />
      <Button aria-label="찾기"><Icon name="searchLeft" /></Button>
    </Joined>
    <NameField>거래소</NameField>
    <Joined $gap={1}>
      {["일", "주", "월", "분", "틱", "년"].map((t, i) => <Button key={t} $active={i === 0}>{t}</Button>)}
    </Joined>
    <Joined>
      {[1, 3, 5, 10, 30, 60].map((t) => <Button key={t} $latin>{t}</Button>)}
    </Joined>
    <SelectBox $width={47} $muted>
      <select aria-label="간격"><option>1</option></select>
      <Icon name="chevron" />
    </SelectBox>
    <Joined>
      <DateField $width={68} aria-label="날짜" defaultValue="2024/03/22" />
      <Button aria-label="달력"><Icon name="calendar" /></Button>
    </Joined>
    <Button disabled>당</Button>
    <Joined>
      <Field $width={45} $align="right" aria-label="봉 개수" defaultValue="170" />
      <Spinner>
        <button aria-label="증가">▲</button>
        <button aria-label="감소">▼</button>
      </Spinner>
    </Joined>
    <Slash>/</Slash>
    <Field $width={44} $align="right" aria-label="전체 개수" defaultValue="3000" />
    <Button aria-label="확대"><Icon name="searchPlus" size={16} /></Button>
    <Button aria-label="설정"><Icon name="gear" /></Button>
    <Spacer />
    <Button $width={8} aria-label="더보기"><Icon name="right" size={6} /></Button>
  </Toolbar>
);

const LeftPanel = () => (
  <Sidebar>
    <Tabs>
      <Tab>종목</Tab>
      <Tab $active>지표</Tab>
      <Tab>전략</Tab>
    </Tabs>
    <SearchRow>
      <Joined>
        <Field $width={122} placeholder="스마트 검색" aria-label="스마트 검색" />
        <Button aria-label="검색"><Icon name="search" /></Button>
      </Joined>
      <Button aria-label="펼치기"><Icon name="down" /></Button>
    </SearchRow>
    <Tree>
      <TreeHeader><Icon name="folderOpen" />유형</TreeHeader>
      <TypeList>
        <TypeGroup>차트유형</TypeGroup>
        {CHART_TYPES.map((name, i) => (
          <TypeItem key={name} $latin={/[A-Z]/.test(name)}>
            <input type="radio" name="chart-type" defaultChecked={i === 0} />
            <span>{name}</span>
          </TypeItem>
        ))}
      </TypeList>
      {FOLDERS.map((name) => <TreeHeader key={name}><Icon name="folder" />{name}</TreeHeader>)}
    </Tree>
    <SidebarFooter>
      <span>관심지표</span>
      <Button $width={38} disabled>등록</Button>
      <Button $width={38} disabled>삭제</Button>
    </SidebarFooter>
  </Sidebar>
);

const ChartPanel = () => (
  <Panel>
    <QuoteBar>
      <Last>
        <LastItem $width={77}>2,749.93</LastItem>
        <LastItem $width={57}>▼4.93</LastItem>
        <LastItem $width={64}>-0.18%</LastItem>
        <Amount>298,474(천주)</Amount>
      </Last>
      <Quote $color="#0a0a98"><dt>시</dt><dd>2,751.15</dd></Quote>
      <Quote $color="#b01018"><dt>고</dt><dd>2,763.06</dd></Quote>
      <Quote $color="#0a0a98"><dt>저</dt><dd>2,744.33</dd></Quote>
      <Spacer />
      <Period>[일]</Period>
      <Button aria-label="설정"><Icon name="gear" /></Button>
      <Button $width={30} disabled>매수</Button>
      <Button $width={30} disabled>매도</Button>
      <TinyStack>
        <Tiny $soft aria-label="최대화"><Icon name="box" size={8} /></Tiny>
        <Tiny $soft aria-label="닫기"><Icon name="cut" size={8} /></Tiny>
      </TinyStack>
    </QuoteBar>
    <Pane $grow>
      <PriceChart />
      <Legend $top={3}>
        <LegendItem $color="#111" $named>대기매물</LegendItem>
        <SymbolItem $color="#111">KOSPI</SymbolItem>
        <LegendItem $color="#5a9a14" $named>가격이평 5</LegendItem>
        <LegendItem $color="#5a4ae0">10</LegendItem>
        <LegendItem $color="#2a84c4">20</LegendItem>
        <LegendItem $color="#0a0aa0">60</LegendItem>
        <LegendItem $color="#702846">120</LegendItem>
        <LegendItem $color="#e04048">240</LegendItem>
      </Legend>
      <PaneTools>
        <Tiny>L</Tiny>
        <Tiny>I</Tiny>
        <Tiny>R</Tiny>
        <Tiny aria-label="최대화"><Icon name="box" size={8} /></Tiny>
      </PaneTools>
    </Pane>
    <Pane>
      <VolumeChart />
      <Legend $top={2}>
        <LegendItem $color="#111" $named>거래량</LegendItem>
        <LegendItem $color="#5a9a14" $named>거래이평 5</LegendItem>
        <LegendItem $color="#2a84c4">20</LegendItem>
        <LegendItem $color="#0a0aa0">60</LegendItem>
        <LegendItem $color="#702846">120</LegendItem>
      </Legend>
      <PaneTools>
        <Tiny>L</Tiny>
        <Tiny>I</Tiny>
        <Joined>
          <Tiny aria-label="최대화"><Icon name="box" size={8} /></Tiny>
          <Tiny aria-label="닫기"><Icon name="cut" size={8} /></Tiny>
        </Joined>
      </PaneTools>
    </Pane>
    <TimeAxis>
      <svg viewBox="184 696 865 15" preserveAspectRatio="xMinYMin meet">
        {MONTHS.map(([x, label]) => {
          const year = label.startsWith("20");
          return <AxisText key={label} x={x} y="707" $bold={year} $large={year}>{label}</AxisText>;
        })}
      </svg>
    </TimeAxis>
    <ScrollRow>
      <ScrollButton aria-label="왼쪽">◀</ScrollButton>
      <Track><Thumb /></Track>
      <ScrollButton aria-label="오른쪽">▶</ScrollButton>
      <ScrollTools $width={47} $gap={2}>
        {["prev", "pause", "next"].map((n) => (
          <FlatButton key={n} aria-label={n}><Icon name={n} size={15} /></FlatButton>
        ))}
      </ScrollTools>
      <Zoom type="range" aria-label="확대 비율" defaultValue="4" />
      <ScrollTools $width={175} $gap={4}>
        {BOTTOM_TOOLS.map((n) => (
          <FlatButton key={n} aria-label={n} $boxed={n === "table" || n === "cross"}><Icon name={n} /></FlatButton>
        ))}
      </ScrollTools>
    </ScrollRow>
  </Panel>
);

const toolFace = (name) => {
  if (name === "auto") return <><Icon name="shortSlash" size={8} /><ToolText>AUTO</ToolText></>;
  if (name === "text") return <ToolLetter>T<sup>+</sup></ToolLetter>;
  if (name === "all") return <><ToolText>All</ToolText><Icon name="eraser" size={11} /></>;
  return <Icon name={name} />;
};

const RightTools = () => (
  <ToolStrip>
    <Tool aria-label="새로고침"><Icon name="sync" /></Tool>
    <Tool aria-label="설정"><Icon name="gear" /></Tool>
    <ToolLine />
    {TOOLS.map((name) => (
      <Tool key={name} aria-label={name} $active={name === "lensInfo"}>{toolFace(name)}</Tool>
    ))}
  </ToolStrip>
);

const App = () => {
  return (
    <Window>
      <GlobalStyle />
      <TitleBar>
        <Badge $color="#c8700c">1</Badge>
        <Badge $color="#858585">?</Badge>
        <Title>[9590] 종합차트</Title>
        {TITLE_ICONS.map((name) => (
          <TitleButton key={name} aria-label={name} $apart={name === "minimize"}>
            <Icon name={name} />
          </TitleButton>
        ))}
      </TitleBar>
      <TopTools />
      <Main>
        <LeftPanel />
        <ChartPanel />
        <RightTools />
      </Main>
    </Window>
  );
};

export default App;
